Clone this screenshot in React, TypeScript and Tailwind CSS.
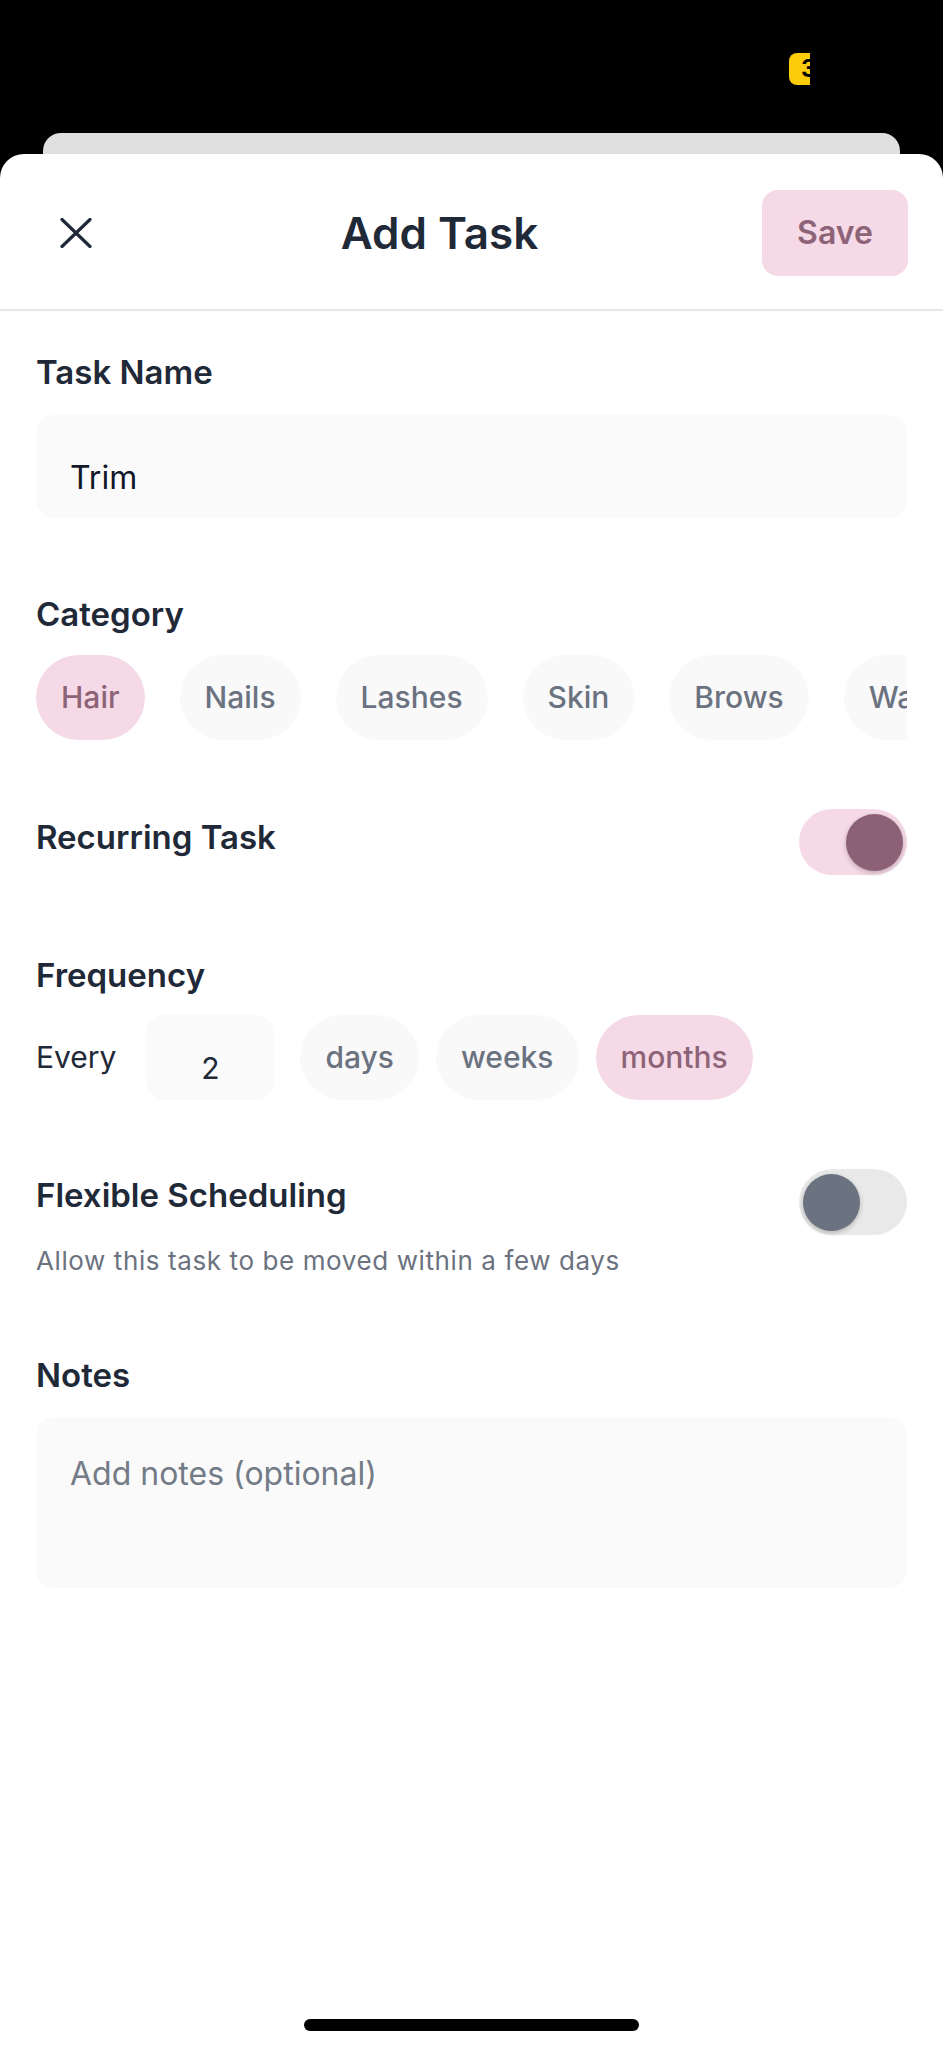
import { useState } from "react";

const categories = ["Hair", "Nails", "Lashes", "Skin", "Brows", "Waxing"];
const units = ["days", "weeks", "months"];

function Toggle({ on, onChange }: { on: boolean; onChange: () => void }) {
  return (
    <button
      type="button"
      onClick={onChange}
      className={`flex h-[66px] w-[108px] shrink-0 items-center rounded-full px-[4px] ${
        on ? "justify-end bg-[#f6d9e6]" : "justify-start bg-[#e9e9ea]"
      }`}
    >
      <span
        className={`block h-[57px] w-[57px] rounded-full shadow-[0_2px_5px_rgba(0,0,0,0.22)] ${
          on ? "bg-[#8c6176]" : "bg-[#6b7280]"
        }`}
      />
    </button>
  );
}

function Chip({
  label,
  active,
  onClick,
}: {
  label: string;
  active: boolean;
  onClick: () => void;
}) {
  return (
    <button
      type="button"
      onClick={onClick}
      className={`h-[85px] shrink-0 rounded-full px-[25px] text-[30px] font-medium ${
        active ? "bg-[#f6d9e6] text-[#8d6377]" : "bg-[#f9f9f9] text-[#6b7280]"
      }`}
    >
      {label}
    </button>
  );
}

export default function App() {
  const [category, setCategory] = useState("Hair");
  const [unit, setUnit] = useState("months");
  const [recurring, setRecurring] = useState(true);
  const [flexible, setFlexible] = useState(false);

  return (
    <div
      className="flex h-[2048px] w-[943px] flex-col bg-black"
      style={{ fontFamily: "Inter, 'Noto Sans', sans-serif" }}
    >
      {/* status bar */}
      <div className="pt-[53px] pl-[789px]">
        <div className="h-[32px] w-[21px] overflow-hidden rounded-l-[8px] bg-[#fccc0a]">
          <span className="block pl-[12px] text-[24px] font-bold leading-[32px] text-black">
            3
          </span>
        </div>
      </div>

      {/* card behind sheet */}
      <div className="mx-[43px] mt-[48px] h-[21px] rounded-t-[18px] bg-[#e0e0e0]" />

      <div className="flex flex-1 flex-col rounded-t-[24px] bg-white">
        {/* header */}
        <div className="flex h-[157px] items-center justify-between border-b-2 border-[#e6e6e6] px-[35px] pt-[2px]">
          <button type="button" className="flex h-[60px] w-[82px] items-center justify-center">
            <svg width="32" height="30" viewBox="0 0 32 30" fill="none">
              <path
                d="M2 1.5L30 28.5M30 1.5L2 28.5"
                stroke="#1f2937"
                strokeWidth="3.2"
                strokeLinecap="round"
              />
            </svg>
          </button>
          <h1 className="text-[44px] font-semibold leading-[56px] text-[#1f2937]">Add Task</h1>
          <button
            type="button"
            className="h-[86px] w-[146px] rounded-[16px] bg-[#f6d9e6] text-[32px] font-semibold text-[#8d6377]"
          >
            Save
          </button>
        </div>

        <div className="flex flex-col px-[36px] pt-[41px]">
          <label className="text-[33px] font-semibold leading-[40px] text-[#1f2937]">
            Task Name
          </label>
          <input
            readOnly
            value="Trim"
            className="mt-[23px] h-[103px] w-full rounded-[18px] bg-[#fafafa] px-[34px] pt-[21px] text-[32px] leading-[40px] text-[#111827] outline-none"
          />

          <label className="mt-[76px] text-[33px] font-semibold leading-[40px] text-[#1f2937]">
            Category
          </label>
          <div className="mt-[21px] flex gap-[35px] overflow-hidden">
            {categories.map((c) => (
              <Chip key={c} label={c} active={category === c} onClick={() => setCategory(c)} />
            ))}
          </div>

          <div className="mt-[69px] flex items-start justify-between">
            <span className="mt-[8px] text-[33px] font-semibold leading-[40px] text-[#1f2937]">
              Recurring Task
            </span>
            <Toggle on={recurring} onChange={() => setRecurring(!recurring)} />
          </div>

          <label className="mt-[80px] text-[33px] font-semibold leading-[40px] text-[#1f2937]">
            Frequency
          </label>
          <div className="mt-[20px] flex items-center">
            <span className="mr-[30px] text-[30px] text-[#1f2937]">Every</span>
            <input
              readOnly
              value="2"
              className="mr-[26px] h-[85px] w-[128px] rounded-[18px] bg-[#fafafa] pt-[20px] text-center text-[30px] text-[#1f2937] outline-none"
            />
            <div className="flex gap-[17px]">
              {units.map((u) => (
                <Chip key={u} label={u} active={unit === u} onClick={() => setUnit(u)} />
              ))}
            </div>
          </div>

          <div className="mt-[69px] flex items-start justify-between">
            <span className="mt-[6px] text-[33px] font-semibold leading-[40px] text-[#1f2937]">
              Flexible Scheduling
            </span>
            <Toggle on={flexible} onChange={() => setFlexible(!flexible)} />
          </div>
          <p className="mt-[10px] text-[26px] leading-[32px] tracking-[0.6px] text-[#6b7280]">
            Allow this task to be moved within a few days
          </p>

          <label className="mt-[78px] text-[33px] font-semibold leading-[40px] text-[#1f2937]">
            Notes
          </label>
          <textarea
            placeholder="Add notes (optional)"
            className="mt-[22px] h-[171px] w-full resize-none rounded-[18px] bg-[#fafafa] px-[34px] pt-[37px] text-[32px] leading-[40px] text-[#1f2937] outline-none placeholder:text-[#737b87]"
          />
        </div>

        {/* home indicator */}
        <div className="mt-auto mb-[17px] flex justify-center">
          <div className="h-[12px] w-[335px] rounded-full bg-black" />
        </div>
      </div>
    </div>
  );
}
